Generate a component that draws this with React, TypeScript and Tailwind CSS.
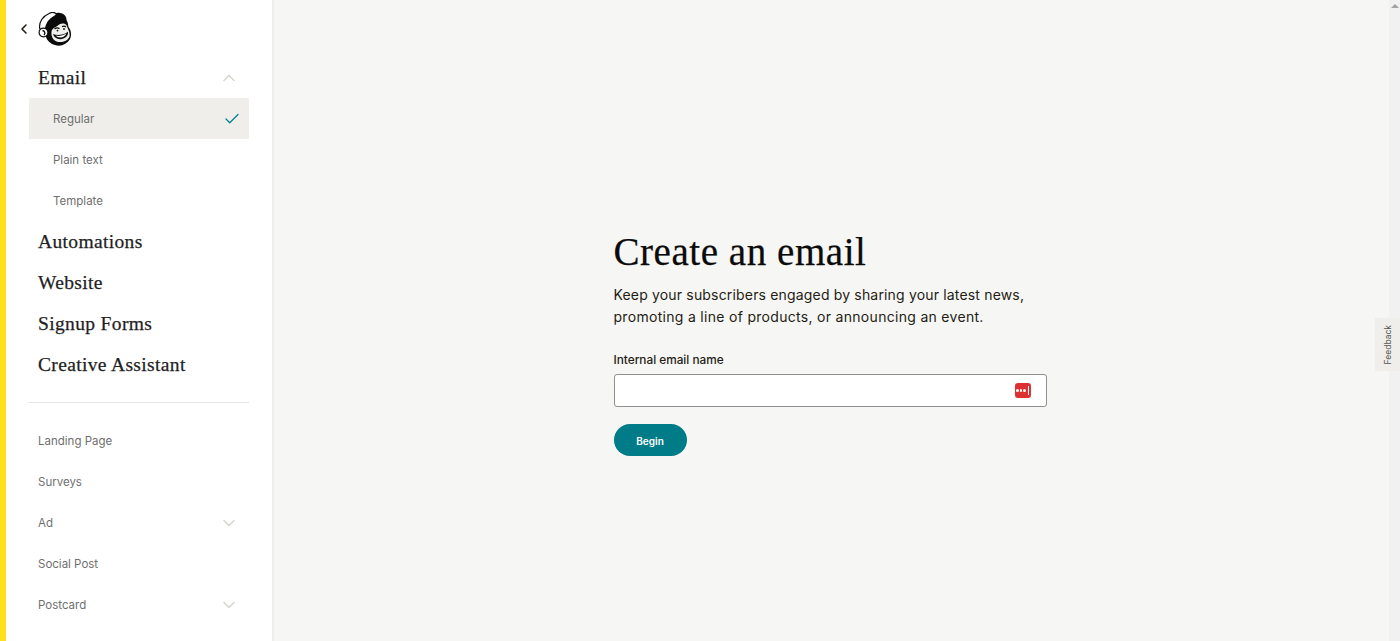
import { ChevronDown, ChevronLeft, ChevronUp, Check } from "lucide-react";

const serif = "font-['Liberation_Serif',serif] [-webkit-text-stroke:0.25px_currentColor]";

const FreddieLogo = () => (
  <svg width="34" height="35" viewBox="0 0 34 35" fill="none">
    {/* head */}
    <path
      d="M8 10 C10 4 16 0 22 1 C26 1.5 28.5 4 28.5 8 C30 10 30 13 30.5 15 C33 18 34 23 32 27 C29 32 23 35 17 33 C12 32 9 28 8 25 C5 20 6 14 8 10 Z"
      fill="#0b0b0b"
    />
    {/* sailor hat */}
    <path
      d="M1.8 17 C0.5 10 5 4 11.5 1.2 C14 0.2 17 0.2 18.5 2.2 C17.5 4 15 5 13 6.8 C10 9.5 8 13 7.5 17 Z"
      fill="#fff"
      stroke="#0b0b0b"
      strokeWidth="1.2"
    />
    {/* ear */}
    <circle cx="5.5" cy="20.5" r="4.4" fill="#fff" stroke="#0b0b0b" strokeWidth="1.2" />
    <path d="M4.5 18.5 C7 19 7.5 21.5 6 23" stroke="#0b0b0b" strokeWidth="1.3" />
    {/* face */}
    <path
      d="M13.5 20 C13.5 16.5 18 15 20 13.5 C22 11 27 10.5 28.8 13.5 C29.5 17 32.5 20 31.5 24.5 C29.5 29.5 23.5 31 18.5 29.5 C15 28 13 24 13.5 20 Z"
      fill="#f0f0ec"
    />
    {/* brows and eyes */}
    <path d="M16.5 17 C18 15.8 20 15.8 21.5 16.6 M24 14.6 C25.5 13.8 27 14 28 15" stroke="#0b0b0b" strokeWidth="1.2" />
    <circle cx="19.5" cy="18.6" r="0.9" fill="#0b0b0b" />
    <circle cx="26" cy="17" r="0.9" fill="#0b0b0b" />
    {/* grin */}
    <path d="M15 22 C19.5 24 25.5 23 30 19.8 C30.5 23.5 27.5 26.8 23 27.2 C19 27.5 16 25.5 15 22 Z" fill="#0b0b0b" />
    <path d="M17.5 23.6 C21 24.4 25 23.5 28.4 21.6 C27.4 24 24.8 25.6 22.2 25.6 C20.2 25.6 18.6 24.9 17.5 23.6 Z" fill="#fff" />
  </svg>
);

const PasswordBadge = () => (
  <span className="flex h-[15px] w-[16px] items-center justify-center gap-[1px] rounded-[3px] bg-[#dc3130]">
    <span className="h-[2.5px] w-[2.5px] rounded-full bg-white" />
    <span className="h-[2.5px] w-[2.5px] rounded-full bg-white" />
    <span className="h-[2.5px] w-[2.5px] rounded-full bg-white" />
    <span className="ml-[1px] h-[9px] w-px bg-white" />
  </span>
);

const MainItem = ({ label, open }: { label: string; open?: boolean }) => (
  <div className="flex h-[41px] items-center justify-between pl-[32px] pr-[33px]">
    <span className={`${serif} text-[19.5px] tracking-[0.35px] text-[#1f1f1f]`}>{label}</span>
    {open && <ChevronUp size={20} strokeWidth={1.8} className="text-[#d6d5cf]" />}
  </div>
);

const SubItem = ({ label, active }: { label: string; active?: boolean }) => (
  <div
    className={`mx-[23px] flex h-[41px] items-center justify-between pl-[24px] pr-[8px] text-[11.5px] text-[#6f6f6f] ${
      active ? "bg-[#efeeea]" : ""
    }`}
  >
    <span className="pt-[2px]">{label}</span>
    {active && <Check size={18} strokeWidth={1.6} className="mt-[1px] text-[#007c89]" />}
  </div>
);

const ExtraItem = ({ label, more }: { label: string; more?: boolean }) => (
  <div className="flex h-[41px] items-center justify-between pl-[32px] pr-[33px] text-[11.5px] text-[#6f6f6f]">
    <span className="pt-[2px]">{label}</span>
    {more && <ChevronDown size={20} strokeWidth={1.8} className="text-[#d6d5cf]" />}
  </div>
);

export default function App() {
  return (
    <div className="relative flex h-[641px] overflow-hidden bg-[#f6f6f4] font-['Inter',sans-serif]">
      <div className="w-[6px] shrink-0 bg-[#ffe01b]" />

      <aside className="w-[268px] shrink-0 border-r-2 border-[#efeeea] bg-white">
        <div className="flex h-[57px] items-start pl-[10px] pt-[12px]">
          <ChevronLeft size={16} strokeWidth={2.4} className="mt-[9px] text-[#241c15]" />
          <span className="ml-[6px]">
            <FreddieLogo />
          </span>
        </div>

        <MainItem label="Email" open />
        <SubItem label="Regular" active />
        <SubItem label="Plain text" />
        <SubItem label="Template" />
        <MainItem label="Automations" />
        <MainItem label="Website" />
        <MainItem label="Signup Forms" />
        <MainItem label="Creative Assistant" />

        <div className="mx-[23px] mb-[17px] mt-[17px] h-px bg-[#e6e5e1]" />

        <ExtraItem label="Landing Page" />
        <ExtraItem label="Surveys" />
        <ExtraItem label="Ad" more />
        <ExtraItem label="Social Post" />
        <ExtraItem label="Postcard" more />
      </aside>

      <main className="flex flex-1 justify-center pr-[3px] pt-[229px]">
        <div className="w-[433px]">
          <h1 className={`${serif} text-[39px] leading-[46px] tracking-[0.55px] text-[#0b0b0b]`}>
            Create an email
          </h1>
          <p className="mt-[9px] text-[14px] leading-[21.5px] tracking-[0.17px] text-[#241c15]">
            Keep your subscribers engaged by sharing your latest news,
            <br />
            <span className="tracking-[0.3px]">promoting a line of products, or announcing an event.</span>
          </p>
          <label className="mt-[24px] block text-[11.8px] font-medium leading-[18px] text-[#241c15]">
            Internal email name
          </label>
          <div className="mt-[5px] flex h-[33px] items-center justify-end rounded-[3px] border border-[#8f8f8f] bg-white pr-[15px]">
            <PasswordBadge />
          </div>
          <button className="mt-[17px] h-[32px] w-[73px] rounded-full bg-[#007c89] pt-[2px] text-[10px] font-semibold text-white">
            Begin
          </button>
        </div>
      </main>

      {/* browser scrollbar */}
      <div className="flex w-[11px] shrink-0 justify-center bg-[#f1f1f1] pt-[4px]">
        <span className="h-0 w-0 border-x-[4px] border-b-[4px] border-x-transparent border-b-[#a3a3a3]" />
      </div>

      <div className="absolute left-[1375px] top-[318px] flex h-[53px] w-[25px] items-center justify-center bg-[#efeeea]">
        <span className="ml-[1px] rotate-180 text-[8.5px] text-[#52524e] [writing-mode:vertical-rl]">Feedback</span>
      </div>
    </div>
  );
}
